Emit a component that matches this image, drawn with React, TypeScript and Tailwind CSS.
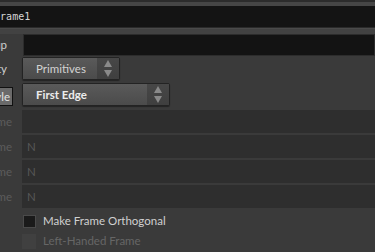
import React from "react";

const font = { fontFamily: "Lato, 'Noto Sans', sans-serif" };

function Arrows() {
    return (
        <svg width="8" height="17" viewBox="0 0 8 17">
            <polygon points="4,0 8,7 0,7" fill="#8a8a8a" />
            <polygon points="0,10 8,10 4,17" fill="#8a8a8a" />
        </svg>
    );
}

interface RowProps {
    label: React.ReactNode;
    pr?: string;
    dim?: boolean;
    children?: React.ReactNode;
    className?: string;
}

function Row({ label, pr = "pr-[10px]", dim, children, className = "" }: RowProps) {
    return (
        <div className={"flex items-stretch " + className}>
            <div className={"w-[102px] flex items-center justify-end whitespace-nowrap text-[11.5px] " + pr + (dim ? " text-[#5c5c5c]" : " text-[#cfcfcf]")}>
                {label}
            </div>
            <div className="flex-1 flex">{children}</div>
        </div>
    );
}

function Dropdown({ value, width, bold }: { value: string; width: string; bold?: boolean }) {
    return (
        <div className={"flex border border-[#232323] rounded-[2px] shadow-[0_1px_1px_rgba(0,0,0,0.4)] " + width}>
            <div className={"flex-1 flex items-center pl-[13px] bg-gradient-to-b from-[#5a5a5a] to-[#4b4b4b] text-[11.5px] " + (bold ? "font-bold text-[#ececec]" : "text-[#d2d2d2]")}>
                {value}
            </div>
            <div className="w-[22px] flex items-center justify-center bg-gradient-to-b from-[#474747] to-[#3f3f3f]">
                <Arrows />
            </div>
        </div>
    );
}

function Field({ text }: { text?: string }) {
    return (
        <div className="flex-1 flex items-center pl-[5px] bg-[#2e2e2e] text-[11.5px] text-[#575757]">{text}</div>
    );
}

export default function App() {
    return (
        <div className="w-[375px] h-[252px] overflow-hidden bg-[#3a3a3a]" style={font}>
            <div className="-ml-[80px] w-[455px]">
                <div className="border-t-2 border-[#2c2c2c] bg-[#464646] pt-[4px]">
                    <div className="h-[21px] bg-[#141414] flex items-center pl-[50px] text-[10px] text-[#d6d6d6]" style={{ fontFamily: "'DejaVu Sans Mono', monospace" }}>
                        polyframe1
                    </div>
                </div>
                <div className="h-[1px] bg-[#2a2a2a]" />
                <div className="h-[6px] bg-[#424242] border-t border-[#4a4a4a]" />

                <Row label="Group" pr="pr-[15px]" className="h-[22px]">
                    <div className="flex-1 ml-[1px] bg-[#131313] border border-[#2c2c2c]" />
                </Row>
                <Row label="Entity" pr="pr-[15px]" className="h-[23px] mt-[1px]">
                    <Dropdown value="Primitives" width="w-[98px]" />
                </Row>
                <div className="flex items-stretch h-[23px] mt-[3px]">
                    <div className="w-[102px] flex items-start justify-end pt-[4px] pr-[9px]">
                        <span className="h-[19px] flex items-center pl-[20px] pr-[2px] bg-[#6a6a6a] border border-[#111111] text-[11.5px] text-[#e2e2e2] whitespace-nowrap">
                            Style
                        </span>
                    </div>
                    <Dropdown value="First Edge" width="w-[148px]" bold />
                </div>
                <Row label="Attribute Name" dim className="h-[23px] mt-[4px]">
                    <Field />
                </Row>
                <Row label="Normal Name" dim className="h-[23px] mt-[2px]">
                    <Field text="N" />
                </Row>
                <Row label="Tangent Name" dim className="h-[23px] mt-[2px]">
                    <Field text="N" />
                </Row>
                <Row label="Bitangent Name" dim className="h-[23px] mt-[2px]">
                    <Field text="N" />
                </Row>

                <div className="flex items-center h-[20px] mt-[3px]">
                    <div className="w-[103px]" />
                    <div className="w-[13px] h-[13px] bg-[#1a1a1a] border border-[#4a4a4a]" />
                    <span className="ml-[7px] text-[11.5px] text-[#d0d0d0]">Make Frame Orthogonal</span>
                </div>
                <div className="flex items-center h-[20px]">
                    <div className="w-[102px]" />
                    <div className="w-[14px] h-[15px] bg-[#404040]" />
                    <span className="ml-[7px] text-[11.5px] text-[#666666]">Left-Handed Frame</span>
                </div>
            </div>
        </div>
    );
}
